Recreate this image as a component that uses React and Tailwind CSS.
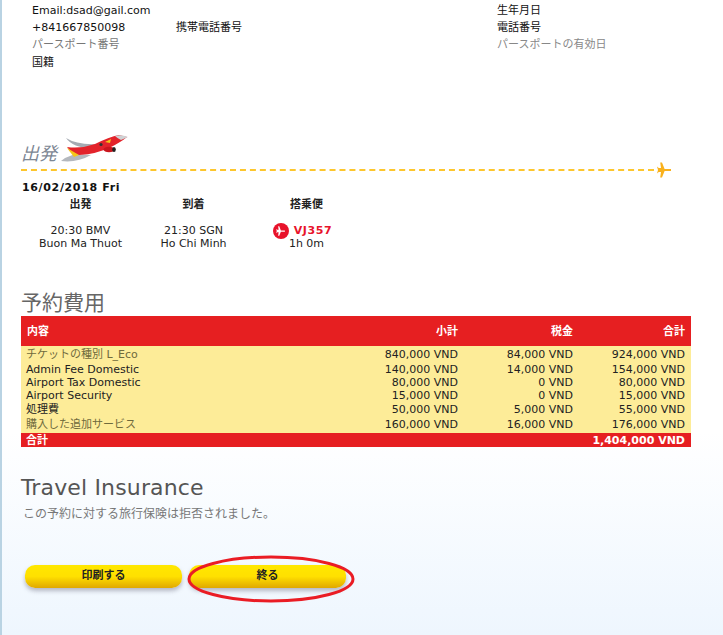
const font = "font-['DejaVu_Sans','Noto_Sans_CJK_JP',sans-serif]";

const rows = [
  { name: "チケットの種別 L_Eco", sub: "840,000 VND", tax: "84,000 VND", total: "924,000 VND", h: "h-[17px]", muted: true },
  { name: "Admin Fee Domestic", sub: "140,000 VND", tax: "14,000 VND", total: "154,000 VND", h: "h-[13px]" },
  { name: "Airport Tax Domestic", sub: "80,000 VND", tax: "0 VND", total: "80,000 VND", h: "h-[13px]" },
  { name: "Airport Security", sub: "15,000 VND", tax: "0 VND", total: "15,000 VND", h: "h-[13px]" },
  { name: "処理費", sub: "50,000 VND", tax: "5,000 VND", total: "55,000 VND", h: "h-[14px]" },
  { name: "購入した追加サービス", sub: "160,000 VND", tax: "16,000 VND", total: "176,000 VND", h: "h-[17px]", muted: true },
];

function PlaneLogo() {
  return (
    <svg width="68" height="30" viewBox="0 0 68 30" className="ml-[4px] shrink-0">
      <path d="M0 27 Q16 29 30 21 L14 20 L4 24Z" fill="#b4b8be" />
      <path d="M5 4 Q16 11 36 10 L40 8 L30 14 Q12 14 5 4Z" fill="#a5abb3" />
      <path d="M6 13 Q20 15 34 10 Q48 3 58 1 L66 3 Q60 8 50 13 Q36 20 18 21 L12 20Z" fill="#e3232b" />
      <path d="M6 14 L18 21 L13 23 Z" fill="#f5c518" />
      <path d="M54 2 Q60 0 67 3 L60 6 Q56 4 54 2Z" fill="#cfd2d4" />
      <path d="M44 8 L50 5 L49 9Z" fill="#f5c518" />
      <circle cx="40" cy="10.5" r="1.6" fill="#333" />
      <ellipse cx="48" cy="15.5" rx="5.5" ry="2.8" fill="#c9151d" />
      <ellipse cx="53" cy="15.5" rx="1.8" ry="2.6" fill="#222" />
    </svg>
  );
}

function PlaneGlyph({ className, color }) {
  return (
    <svg viewBox="0 0 14 16" className={className}>
      <path d="M14 7 L7.6 7 L5 0.5 L3.2 0.5 L4 6 L1.8 6 L0 4.6 L1 8 L0 11.4 L1.8 10 L4 10 L3.2 15.5 L5 15.5 L7.6 9 L14 9Z" fill={color} />
    </svg>
  );
}

function InfoRow({ className, children }) {
  return <div className={`grid grid-cols-[144px_321px_1fr] items-center text-[11px] text-[#111] ${className}`}>{children}</div>;
}

function YellowButton({ children, className = "" }) {
  return (
    <button className={`h-[23px] w-[157px] rounded-[10px] bg-gradient-to-b from-[#ffe800] via-[#ffe000] to-[#e0a800] text-[11px] font-bold text-[#222] shadow-[0_3px_4px_rgba(90,90,110,0.4)] ${className}`}>
      {children}
    </button>
  );
}

export default function App() {
  return (
    <div className={`${font} relative h-[635px] w-[723px] overflow-hidden border-l-2 border-[#b9d3e3] bg-gradient-to-b from-white from-[68%] to-[#eef6fe]`}>
      {/* passenger info */}
      <div className="pl-[30px] pt-[3px]">
        <InfoRow className="h-[15px]">
          <span>Email:dsad@gail.com</span>
          <span />
          <span>生年月日</span>
        </InfoRow>
        <InfoRow className="mt-[2px] h-[17px]">
          <span>+841667850098</span>
          <span>携帯電話番号</span>
          <span>電話番号</span>
        </InfoRow>
        <InfoRow className="h-[17px]">
          <span className="text-[#777]">パースポート番号</span>
          <span />
          <span className="text-[#888]">パースポートの有効日</span>
        </InfoRow>
        <InfoRow className="mt-px h-[17px]">
          <span>国籍</span>
        </InfoRow>
      </div>

      {/* departure */}
      <div className="ml-[19px] mt-[62px] flex h-[30px] items-end">
        <span className="mb-[-1px] font-['Liberation_Serif','Noto_Sans_CJK_JP',serif] text-[18px] italic leading-[22px] text-[#7d8794]">出発</span>
        <PlaneLogo />
      </div>
      <div className="ml-[19px] mt-[6px] flex h-0 w-[650px] items-center">
        <div className="mr-[3px] w-[634px] border-t-2 border-dashed border-[#fdc62d]" />
        <PlaneGlyph className="h-[16px] w-[14px] shrink-0" color="#f9b11c" />
      </div>
      <div className="ml-[20px] mt-[11px] text-[11px] font-bold leading-[13px] tracking-[0.65px] text-[#111]">16/02/2018 Fri</div>

      <div className="ml-[22px] mt-[4px] grid w-[340px] grid-cols-[113px_113px_113px] text-center text-[11px] leading-[13px] text-[#222]">
        <div className="font-bold">出発</div>
        <div className="font-bold">到着</div>
        <div className="font-bold">搭乗便</div>
        <div className="mt-[13px]">20:30 BMV</div>
        <div className="mt-[13px]">21:30 SGN</div>
        <div className="mt-[13px] flex h-[13px] items-center justify-center gap-[5px] pr-[8px] font-bold tracking-[0.6px] text-[#e8132b]">
          <span className="flex h-[16px] w-[16px] items-center justify-center rounded-full bg-[#e8132b]">
            <PlaneGlyph className="h-[10px] w-[11px]" color="#fff" />
          </span>
          VJ357
        </div>
        <div>Buon Ma Thuot</div>
        <div>Ho Chi Minh</div>
        <div>1h 0m</div>
      </div>

      {/* price table */}
      <h2 className="ml-[19px] mt-[40px] text-[21px] leading-[26px] text-[#666]">予約費用</h2>
      <table className="ml-[19px] w-[670px] table-fixed border-collapse text-right text-[11px] leading-[13px] text-[#222]">
        <colgroup>
          <col className="w-[328px]" />
          <col className="w-[115px]" />
          <col className="w-[115px]" />
          <col className="w-[112px]" />
        </colgroup>
        <thead>
          <tr className="h-[30px] bg-[#e61f21] font-bold text-white">
            <th className="pl-[6px] text-left">内容</th>
            <th className="pr-[6px] text-right">小計</th>
            <th className="pr-[6px] text-right">税金</th>
            <th className="pr-[6px] text-right">合計</th>
          </tr>
        </thead>
        <tbody className="bg-[#fdec98]">
          {rows.map((r) => (
            <tr key={r.name} className={r.h}>
              <td className={`p-0 pl-[5px] text-left ${r.muted ? "text-[#6f6a3c]" : ""}`}>{r.name}</td>
              <td className="p-0 pr-[6px]">{r.sub}</td>
              <td className="p-0 pr-[6px]">{r.tax}</td>
              <td className="p-0 pr-[6px]">{r.total}</td>
            </tr>
          ))}
          <tr className="h-[14px] bg-[#e61f21] font-bold text-white">
            <td className="p-0 pl-[5px] text-left">合計</td>
            <td colSpan={3} className="p-0 pr-[6px]">1,404,000 VND</td>
          </tr>
        </tbody>
      </table>

      {/* insurance */}
      <h2 className="ml-[19px] mt-[28px] text-[22px] leading-[25px] tracking-[0.15px] text-[#555]">Travel Insurance</h2>
      <p className="ml-[21px] mt-[7px] text-[12px] leading-[15px] text-[#777]">この予約に対する旅行保険は拒否されました。</p>

      <div className="ml-[23px] mt-[43px] flex gap-[7px]">
        <YellowButton>印刷する</YellowButton>
        <YellowButton>終る</YellowButton>
      </div>

      {/* red marker around the finish button */}
      <svg width="170" height="48" viewBox="0 0 170 48" className="absolute left-[185px] top-[555px]">
        <ellipse cx="84" cy="24" rx="82" ry="22" fill="none" stroke="#ea1c24" strokeWidth="3" />
      </svg>
    </div>
  );
}
